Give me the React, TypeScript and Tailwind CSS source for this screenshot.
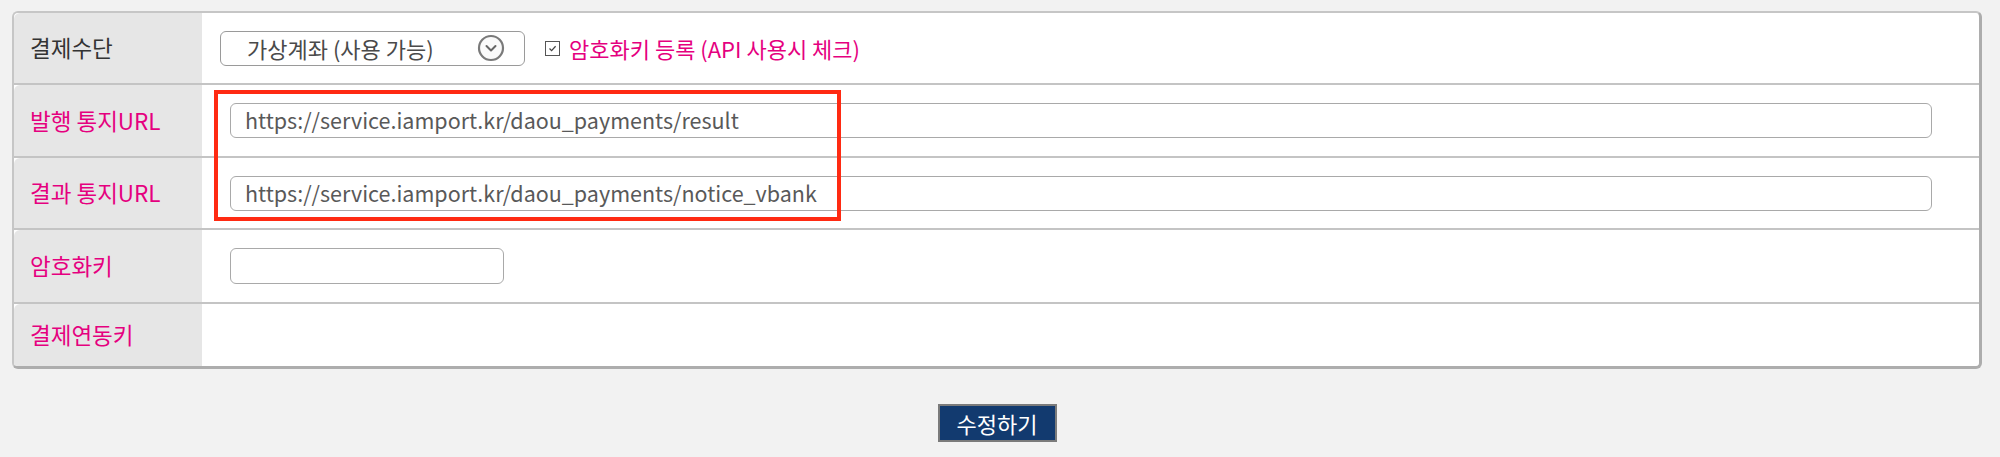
import React from "react";

const F = "font-['Noto_Sans_CJK_KR','Noto_Sans',sans-serif]";

function Label({ children, pink = true }: { children: React.ReactNode; pink?: boolean }) {
  return (
    <div
      className={`w-[188px] shrink-0 h-full bg-[#e6e6e6] rounded-tl-[6px] flex items-center pl-[16px] text-[22.5px] ${
        pink ? "text-[#e5007f]" : "text-[#333333]"
      }`}
    >
      {children}
    </div>
  );
}

function UrlInput({ value }: { value: string }) {
  return (
    <div className="flex-1 h-[35px] border-[1.5px] border-[#a9a9a9] rounded-[6px] bg-white flex items-center pl-[14px] text-[21.5px] text-[#595959]">
      {value}
    </div>
  );
}

export default function App() {
  return (
    <div className={`min-h-screen w-[2000px] h-[457px] bg-[#f2f2f2] pt-[11px] pl-[12px] pr-[18px] relative ${F}`}>
      <div className="bg-white rounded-[6px] border-2 border-[#c6c6c6] border-r-[3px] border-r-[#adadad] border-b-[3px] border-b-[#adadad] overflow-hidden">
        {/* Row 1 */}
        <div className="flex h-[72px] border-b-2 border-[#c4c4c4]">
          <Label pink={false}>결제수단</Label>
          <div className="flex-1 flex items-center pl-[18px]">
            <div className="relative w-[305px] h-[35px] border-[1.5px] border-[#9a9a9a] rounded-[6px] bg-white flex items-center pl-[26px] text-[22px] text-[#4a4a4a]">
              가상계좌 (사용 가능)
              <svg
                className="absolute right-[19px] top-1/2 -translate-y-1/2"
                width="28"
                height="28"
                viewBox="0 0 28 28"
              >
                <circle cx="14" cy="14" r="12" fill="#fafafa" stroke="#7a7a7a" strokeWidth="2.2" />
                <path d="M9.5 12 L14 16.5 L18.5 12" fill="none" stroke="#666666" strokeWidth="2" strokeLinecap="round" strokeLinejoin="round" />
              </svg>
            </div>
            <div className="ml-[20px] w-[15px] h-[15px] border-[1.5px] border-[#555555] bg-white flex items-center justify-center">
              <svg width="11" height="11" viewBox="0 0 11 11">
                <path d="M2.5 5.5 L4.6 7.6 L8.6 3.2" fill="none" stroke="#444444" strokeWidth="1.3" />
              </svg>
            </div>
            <span className="ml-[9px] text-[22px] text-[#e5007f]">암호화키 등록 (API 사용시 체크)</span>
          </div>
        </div>
        {/* Row 2 */}
        <div className="flex h-[73px] border-b-2 border-[#c4c4c4]">
          <Label>발행 통지URL</Label>
          <div className="flex-1 flex items-center pl-[28px] pr-[47px]">
            <UrlInput value="https://service.iamport.kr/daou_payments/result" />
          </div>
        </div>
        {/* Row 3 */}
        <div className="flex h-[72px] border-b-2 border-[#c4c4c4]">
          <Label>결과 통지URL</Label>
          <div className="flex-1 flex items-center pl-[28px] pr-[47px]">
            <UrlInput value="https://service.iamport.kr/daou_payments/notice_vbank" />
          </div>
        </div>
        {/* Row 4 */}
        <div className="flex h-[74px] border-b-2 border-[#c4c4c4]">
          <Label>암호화키</Label>
          <div className="flex-1 flex items-center pl-[28px]">
            <div className="w-[274px] h-[36px] border-[1.5px] border-[#a9a9a9] rounded-[6px] bg-white" />
          </div>
        </div>
        {/* Row 5 */}
        <div className="flex h-[62px]">
          <Label>결제연동키</Label>
          <div className="flex-1" />
        </div>
      </div>

      <div className="flex justify-center mt-[35px]">
        <button className="w-[119px] h-[38px] border-2 border-[#7b7b7b] bg-[#123a6f] text-white text-[22px] leading-none flex items-center justify-center">
          수정하기
        </button>
      </div>

      {/* red annotation box */}
      <div className="absolute left-[214px] top-[90px] w-[627px] h-[131px] border-[4px] border-[#ff2a12] pointer-events-none" />
    </div>
  );
}
